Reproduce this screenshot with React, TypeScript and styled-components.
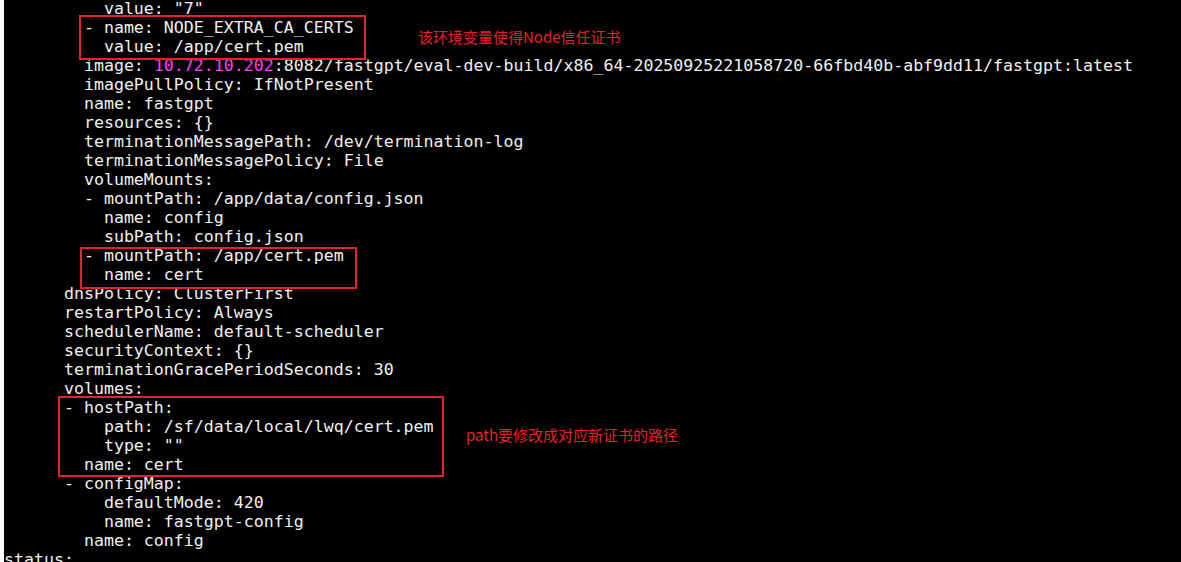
import React from "react";
import styled, { createGlobalStyle } from "styled-components";

const GlobalStyle = createGlobalStyle`
  html, body {
    margin: 0;
    padding: 0;
    background: #000;
    overflow: hidden;
  }
`;

const Screen = styled.div`
  position: relative;
  width: 1181px;
  height: 562px;
  box-sizing: border-box;
  background: #000;
  border-left: 4px solid #ffffff;
  overflow: hidden;
`;

const Code = styled.div`
  display: flex;
  flex-direction: column;
  margin-top: -1px;
  font-family: "DejaVu Sans Mono", monospace;
  font-size: 16.6px;
  line-height: 19px;
  color: #f0f0f0;
`;

const Line = styled.div`
  white-space: pre;
  height: 19px;
`;

const Ip = styled.span`
  color: #ff3cff;
`;

const Highlight = styled.div<{ $left: number; $top: number; $w: number; $h: number }>`
  position: absolute;
  left: ${(p) => p.$left - 4}px;
  top: ${(p) => p.$top}px;
  width: ${(p) => p.$w}px;
  height: ${(p) => p.$h}px;
  box-sizing: border-box;
  border: 2px solid #e8202a;
  pointer-events: none;
`;

const Note = styled.div<{ $left: number; $top: number }>`
  position: absolute;
  left: ${(p) => p.$left - 4}px;
  top: ${(p) => p.$top}px;
  font-family: "Noto Sans CJK SC", "Noto Sans", sans-serif;
  font-size: 15px;
  line-height: 20px;
  color: #e8202a;
  white-space: nowrap;
`;

const lines: React.ReactNode[] = [
  '          value: "7"',
  "        - name: NODE_EXTRA_CA_CERTS",
  "          value: /app/cert.pem",
  <>
    {"        image: "}
    <Ip>10.72.10.202</Ip>
    {":8082/fastgpt/eval-dev-build/x86_64-20250925221058720-66fbd40b-abf9dd11/fastgpt:latest"}
  </>,
  "        imagePullPolicy: IfNotPresent",
  "        name: fastgpt",
  "        resources: {}",
  "        terminationMessagePath: /dev/termination-log",
  "        terminationMessagePolicy: File",
  "        volumeMounts:",
  "        - mountPath: /app/data/config.json",
  "          name: config",
  "          subPath: config.json",
  "        - mountPath: /app/cert.pem",
  "          name: cert",
  "      dnsPolicy: ClusterFirst",
  "      restartPolicy: Always",
  "      schedulerName: default-scheduler",
  "      securityContext: {}",
  "      terminationGracePeriodSeconds: 30",
  "      volumes:",
  "      - hostPath:",
  "          path: /sf/data/local/lwq/cert.pem",
  '          type: ""',
  "        name: cert",
  "      - configMap:",
  "          defaultMode: 420",
  "          name: fastgpt-config",
  "        name: config",
  "status:",
];

export default function App() {
  return (
    <>
      <GlobalStyle />
      <Screen>
        <Code>
          {lines.map((l, i) => (
            <Line key={i}>{l}</Line>
          ))}
        </Code>
        <Highlight $left={79} $top={15} $w={287} $h={45} />
        <Highlight $left={80} $top={247} $w={277} $h={42} />
        <Highlight $left={58} $top={396} $w={386} $h={81} />
        <Note $left={418} $top={27}>该环境变量使得Node信任证书</Note>
        <Note $left={466} $top={425}>path要修改成对应新证书的路径</Note>
      </Screen>
    </>
  );
}
